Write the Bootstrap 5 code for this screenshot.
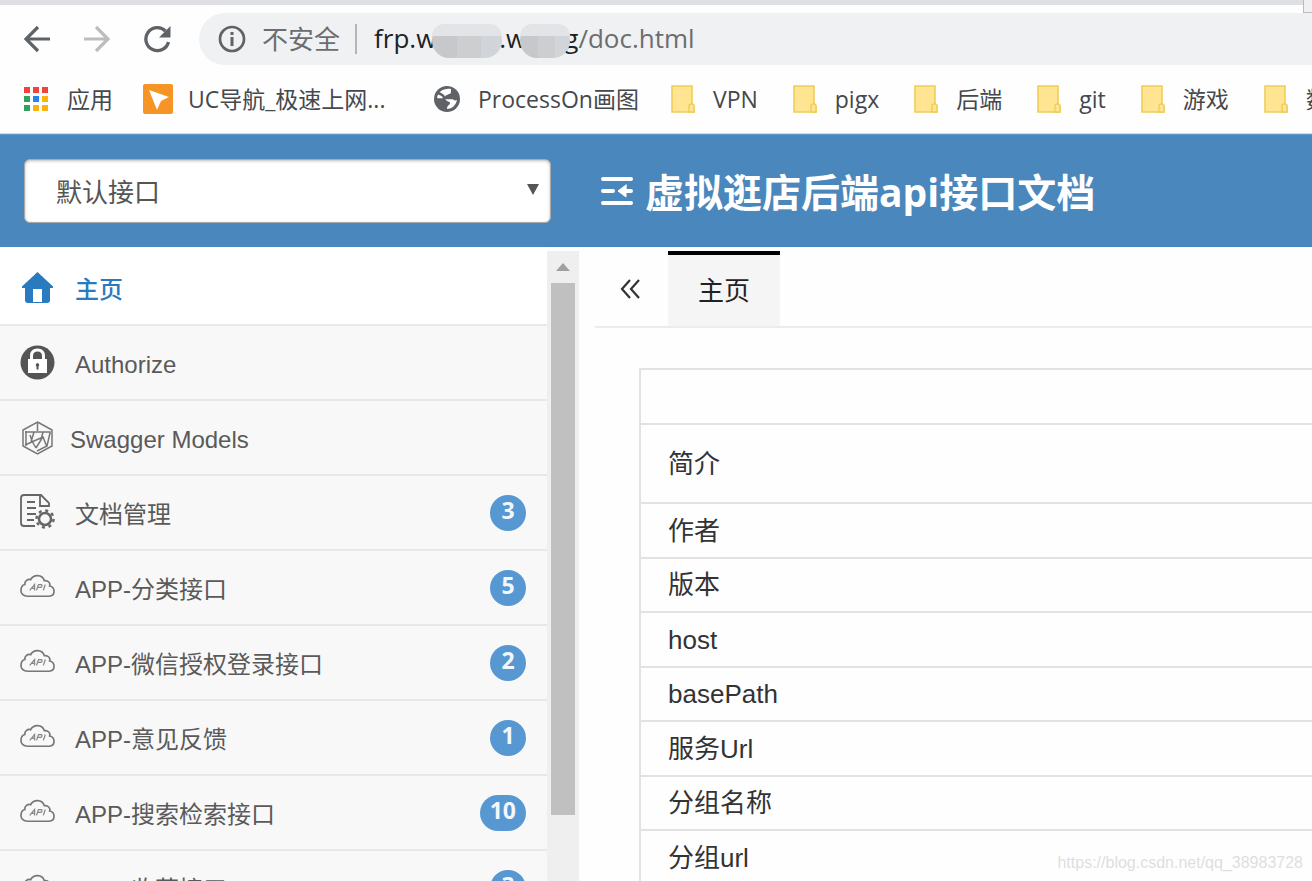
<!DOCTYPE html>
<html lang="zh-CN">
<head>
<meta charset="utf-8">
<meta name="viewport" content="width=device-width, initial-scale=1">
<title>虚拟逛店后端api接口文档</title>
<link href="https://cdn.jsdelivr.net/npm/bootstrap@5.3.0/dist/css/bootstrap.min.css" rel="stylesheet">
<style>
body{font-family:"Liberation Sans","Noto Sans CJK SC",sans-serif;font-size:24px;line-height:36px;color:#333;background:#fefefe}
svg{display:block;flex-shrink:0}
.ui-font{font-family:"Open Sans","Noto Sans CJK SC",sans-serif}
.tab-strip{height:5px;background:#dee0e5}
.corner{right:0;top:0;width:9px;height:13px;background:#f0f0f0;border-left:1px solid #bbb;border-bottom:1px solid #bbb}
.toolbar{padding:8px 0 0 23px}
.tool-btn{border:0;background:none;padding:0;width:28px;height:28px;margin-right:32px}
.tool-btn:last-of-type{margin-right:28px}
.omnibox{height:52px;background:#f0f1f3;border-radius:26px 0 0 26px;padding-left:19px;font-size:26px;color:#6b6d70}
.omnibox svg{margin-right:16px}
.split{width:2px;height:30px;background:#b4b5b8;margin:0 17px 0 15px}
.host{color:#202124}
.blob{display:inline-block;height:34px;border-radius:17px;vertical-align:middle;position:relative;background:linear-gradient(90deg,#c6c8cb 36%,#cdced0 36%,#cdced0 70%,#d1d4d8 70%)}
.blob::before{content:"";position:absolute;inset:0 0 auto;height:12px;border-radius:17px 17px 0 0;background:#e3e4e7}
.blob-a{width:70px;margin:0 -3px 0 -4px}
.blob-b{width:50px;margin:0 -6px 0 -6px}
.bookmarks{height:69px;padding-left:23px;border-bottom:1px solid #d5dbe0;font-size:23px;color:#45484c}
.bookmarks a{color:inherit;gap:18px;margin-right:35px}
.bookmarks a:first-child{margin-right:30px}
.bookmarks .uc{gap:15px;margin-right:29px}
.bookmarks .uc span{width:217px}
.bookmarks a:nth-child(3){margin-right:32px}
.top-head{height:113px;background:#4a87bc;border-top:1px solid #5f9acb;padding-left:24px}
.group-box{width:527px;margin-right:49px}
.group-box select{height:64px;border:1px solid #aaa;border-radius:6px;padding:4px 30px 0 31px;font-size:26px;color:#555;background:#fff;box-shadow:inset 0 1px 3px #bbb;appearance:none}
.group-box svg{right:12px;top:24px}
.page-title{font-size:39px;line-height:48px;font-weight:700;color:#fff;margin:0 0 0 11px;padding-top:2px}
.side-menu{width:547px}
.side-menu a{height:75px;padding:0 21px 0 20px;border-bottom:2px solid #e8e8e8;background:#f8f8f8;color:#5a5a5a}
.side-menu li:first-child a{height:79px;background:#fff;color:#2a7abf;font-weight:500;padding-top:4px}
.side-menu a svg{margin-right:20px;width:35px}
.side-menu li:nth-child(3) a svg{margin-right:15px}
.menu-text{padding-top:4px}
.count{min-width:36px;height:36px;border-radius:18px;background:#5798d2;color:#f2f7fc;padding:0 10px;line-height:31px;font-weight:700;font-size:23px;font-family:"Open Sans",sans-serif;text-align:center}
.scroll-rail{width:32px;margin-top:4px;background:#efefef}
.rail-btn{height:32px;border:0;padding:0;background:none}
.rail-thumb{width:24px;height:89%;background:#c0c0c0}
.tabs{height:81px;border-bottom:2px solid #ececec;padding-top:4px}
.tabs button{border:0;background:none;padding:0;color:#222}
.fold{width:73px}
.tabs .fold{padding-right:3px}
.tabs .tab-on{width:112px;background:#f5f5f5;border-top:4px solid #000;font-size:26px}
.doc-pane{margin-left:16px}
.doc-table{margin:40px 0 0 44px;border:2px solid #e2e2e2;border-right:0;font-size:26px;color:#333;border-collapse:collapse}
.doc-table th{height:54px;padding:0 27px;font-weight:400;border-bottom:2px solid #e2e2e2;line-height:36px}
.doc-table tr:nth-child(odd) th{height:55px}
.doc-table tr:nth-child(2) th{height:79px}
.watermark{right:9px;bottom:6px;font-size:16px;line-height:24px;color:#dedede}
</style>
</head>
<body class="vh-100 overflow-hidden d-flex flex-column position-relative">
<svg width="0" height="0" class="position-absolute" aria-hidden="true">
  <symbol id="folder" viewBox="0 0 24 28"><path d="M1 1h20v18q2 1 2 3v5H1z" fill="#ffe591" stroke="#f0cd58" stroke-width="1.6"/><path d="M18 27v-6q0-2 2.500-2t2.500 2v6z" fill="#ffe591" stroke="#f0cd58" stroke-width="1.4"/></symbol>
  <symbol id="cloud" viewBox="0 0 36 24"><path d="M8 22.500C3 22.500 1 19.500 1 16.500C1 13 3 11 5 10.500C4.500 7 8 4.500 11 5.500C13.500 0 23 -.5 25 6.500C29 6 31.500 9 30.500 12C33 12.500 35 14.500 35 17.500C35 20.500 33 22.500 30 22.500z" fill="none" stroke="#777" stroke-width="1.700"/><path d="M10 16.500l5-6v6m-3.500-2h3.500M17 16.500l2-6h3q1.500 1.500-.5 3h-3M24 16.500l2-6" fill="none" stroke="#888" stroke-width="1.300"/></symbol>
</svg>
<div class="tab-strip flex-shrink-0"></div>
<div class="corner position-absolute"></div>

<div class="toolbar d-flex align-items-center flex-shrink-0">
  <button class="tool-btn" aria-label="后退"><svg width="28" height="28" viewBox="0 0 28 28" fill="none" stroke="#5f6368" stroke-width="3.200"><path d="M27 14H3M15 2L3 14l12 12"/></svg></button>
  <button class="tool-btn" aria-label="前进"><svg width="28" height="28" viewBox="0 0 28 28" fill="none" stroke="#bbbdbf" stroke-width="3.200"><path d="M1 14h24M13 2l12 12-12 12"/></svg></button>
  <button class="tool-btn" aria-label="刷新"><svg width="28" height="28" viewBox="0 0 28 28"><path d="M22.500 6A11.500 11.500 0 1 0 25.500 17" fill="none" stroke="#5f6368" stroke-width="3.300"/><path d="M27.500 1v11.500H16z" fill="#5f6368"/></svg></button>
  <div class="omnibox ui-font d-flex align-items-center flex-grow-1 text-nowrap">
    <svg width="28" height="28" viewBox="0 0 28 28"><circle cx="14" cy="14" r="12" fill="none" stroke="#5f6368" stroke-width="2.700"/><path d="M12.500 7h3v3h-3zm0 5h3v9h-3z" fill="#5f6368"/></svg>
    <span>不安全</span><span class="split"></span>
    <span><span class="host">frp.w<span class="blob blob-a"></span>.w<span class="blob blob-b"></span>g</span>/doc.html</span>
  </div>
</div>

<nav class="bookmarks ui-font d-flex align-items-center flex-shrink-0 text-nowrap overflow-hidden" aria-label="书签">
  <a href="#" class="d-flex align-items-center text-decoration-none flex-shrink-0"><svg width="26" height="26" viewBox="0 0 26 26"><path d="M1 1h6v6H1zM10 1h6v6h-6zM19 1h6v6h-6z" fill="#f1423c"/><path d="M1 10h6v6H1zM1 19h6v6H1z" fill="#34a05a"/><path d="M10 10h6v6h-6z" fill="#2186f3"/><path d="M19 10h6v6h-6zM10 19h6v6h-6zM19 19h6v6h-6z" fill="#fbb20c"/></svg><span>应用</span></a>
  <a href="#" class="uc d-flex align-items-center text-decoration-none flex-shrink-0"><svg width="30" height="30" viewBox="0 0 30 30"><rect width="30" height="30" rx="2" fill="#f69426"/><path d="M6 6l20 7-8 4-4 9z" fill="#fff"/></svg><span>UC导航_极速上网...</span></a>
  <a href="#" class="d-flex align-items-center text-decoration-none flex-shrink-0"><svg width="26" height="26" viewBox="0 0 26 26"><circle cx="13" cy="13" r="13" fill="#5f6368"/><path d="M3 12c3 1 7-1 9 2c1 2 4 1 4 3c0 2-3 2-3 6c5 0 9-4 10-9c-2 1-4 0-5-2c-3 0-7 1-7-1c0-3 6-2 6-5V3C9 2 4 6 3 12z" fill="#fff"/><path d="M4 7c3 1 6 3 6 5h8l1-4" fill="none" stroke="#5f6368" stroke-width="2.500"/></svg><span>ProcessOn画图</span></a>
  <a href="#" class="d-flex align-items-center text-decoration-none flex-shrink-0"><svg width="24" height="28"><use href="#folder"/></svg><span>VPN</span></a>
  <a href="#" class="d-flex align-items-center text-decoration-none flex-shrink-0"><svg width="24" height="28"><use href="#folder"/></svg><span>pigx</span></a>
  <a href="#" class="d-flex align-items-center text-decoration-none flex-shrink-0"><svg width="24" height="28"><use href="#folder"/></svg><span>后端</span></a>
  <a href="#" class="d-flex align-items-center text-decoration-none flex-shrink-0"><svg width="24" height="28"><use href="#folder"/></svg><span>git</span></a>
  <a href="#" class="d-flex align-items-center text-decoration-none flex-shrink-0"><svg width="24" height="28"><use href="#folder"/></svg><span>游戏</span></a>
  <a href="#" class="d-flex align-items-center text-decoration-none flex-shrink-0"><svg width="24" height="28"><use href="#folder"/></svg><span>数</span></a>
</nav>

<header class="top-head d-flex align-items-center flex-shrink-0 text-nowrap">
  <div class="group-box position-relative flex-shrink-0">
    <select class="w-100 d-block" aria-label="接口分组"><option>默认接口</option></select>
    <svg class="position-absolute" width="12" height="13" viewBox="0 0 12 13"><path d="M0 1h12L6 12z" fill="#555"/></svg>
  </div>
  <svg width="34" height="30" viewBox="0 0 34 30" fill="none" stroke="#fff" stroke-width="4" stroke-linecap="round"><path d="M3 3h28M3 15h10M3 27h28M22 15h9"/><path d="M26 9l-8 6 8 6v-6z" fill="#fff" stroke-width="1"/></svg>
  <h1 class="page-title ui-font">虚拟逛店后端api接口文档</h1>
</header>

<div class="d-flex flex-grow-1 overflow-hidden">
  <ul class="side-menu list-unstyled m-0 flex-shrink-0 text-nowrap">
    <li><a href="#" class="d-flex align-items-center text-decoration-none"><svg height="34" viewBox="0 0 35 34"><path d="M17.500 1L33 15.500V17h-3v12q0 3-3 3H8q-3 0-3-3V17H2v-1.500z" fill="#2a7abf"/><path d="M13 18h9v13h-9z" fill="#fff"/></svg><span class="menu-text">主页</span></a></li>
    <li><a href="#" class="d-flex align-items-center text-decoration-none"><svg height="36" viewBox="0 0 35 36"><circle cx="17.500" cy="17.500" r="17" fill="#555"/><path d="M11.500 15V11q0-6 6-6t6 6v4" fill="none" stroke="#fff" stroke-width="3"/><path d="M8 14h19v14H8z" fill="#fff"/><path d="M17.500 18a2 2 0 0 1 1 3.500v3h-2v-3a2 2 0 0 1 1-3.500" fill="#555"/></svg><span class="menu-text">Authorize</span></a></li>
    <li><a href="#" class="d-flex align-items-center text-decoration-none"><svg height="34" viewBox="0 0 35 34" fill="none" stroke="#777" stroke-width="1.500"><path d="M17.500 1L32 9v16l-14.500 8L3 25V9z"/><path d="M5 11h25v2M6 10v15M30 12l-3 13-10 5M17.500 2v8M5 24l18-8 4 10M10 14l2 6 4 7M14 11l-3 10M23 11l-2 8-5 8"/></svg><span class="menu-text">Swagger Models</span></a></li>
    <li><a href="#" class="d-flex align-items-center text-decoration-none"><svg height="40" viewBox="0 0 35 40" fill="none" stroke="#666" stroke-width="1.800"><path d="M15 33H4q-3 0-3-3V5q0-3 3-3h17l8 8v4M20 2v11h9M7 9h8M7 15h9M7 21h9M7 27h7"/><circle cx="25" cy="26" r="6" stroke-width="2.500"/><circle cx="25" cy="26" r="8.500" stroke-width="2.500" stroke-dasharray="3 3.670"/></svg><span class="menu-text">文档管理</span><span class="count ms-auto">3</span></a></li>
    <li><a href="#" class="d-flex align-items-center text-decoration-none"><svg height="28"><use href="#cloud" height="24"/></svg><span class="menu-text">APP-分类接口</span><span class="count ms-auto">5</span></a></li>
    <li><a href="#" class="d-flex align-items-center text-decoration-none"><svg height="28"><use href="#cloud" height="24"/></svg><span class="menu-text">APP-微信授权登录接口</span><span class="count ms-auto">2</span></a></li>
    <li><a href="#" class="d-flex align-items-center text-decoration-none"><svg height="28"><use href="#cloud" height="24"/></svg><span class="menu-text">APP-意见反馈</span><span class="count ms-auto">1</span></a></li>
    <li><a href="#" class="d-flex align-items-center text-decoration-none"><svg height="28"><use href="#cloud" height="24"/></svg><span class="menu-text">APP-搜索检索接口</span><span class="count ms-auto">10</span></a></li>
    <li><a href="#" class="d-flex align-items-center text-decoration-none"><svg height="28"><use href="#cloud" height="24"/></svg><span class="menu-text">APP-收藏接口</span><span class="count ms-auto">3</span></a></li>
  </ul>
  <div class="scroll-rail d-flex flex-column align-items-center flex-shrink-0">
    <button class="rail-btn flex-shrink-0" aria-label="向上滚动"><svg width="14" height="8" viewBox="0 0 14 8"><path d="M0 8l7-8 7 8z" fill="#a0a0a0"/></svg></button>
    <div class="w-100 flex-grow-1 d-flex justify-content-center"><div class="rail-thumb"></div></div>
  </div>
  <main class="doc-pane flex-grow-1">
    <div class="tabs d-flex">
      <button class="fold d-flex align-items-center justify-content-center" aria-label="收起标签"><svg width="20" height="20" viewBox="0 0 20 20" fill="none" stroke="#333" stroke-width="2.200"><path d="M10 1L2 10l8 9M19 1l-8 9 8 9"/></svg></button>
      <button class="tab-on">主页</button>
    </div>
    <div class="d-flex">
      <table class="doc-table flex-grow-1">
        <tbody>
          <tr><th></th></tr>
          <tr><th scope="row">简介</th></tr>
          <tr><th scope="row">作者</th></tr>
          <tr><th scope="row">版本</th></tr>
          <tr><th scope="row">host</th></tr>
          <tr><th scope="row">basePath</th></tr>
          <tr><th scope="row">服务Url</th></tr>
          <tr><th scope="row">分组名称</th></tr>
          <tr><th scope="row">分组url</th></tr>
        </tbody>
      </table>
    </div>
  </main>
</div>
<div class="watermark position-absolute">https://blog.csdn.net/qq_38983728</div>
<script src="https://cdn.jsdelivr.net/npm/bootstrap@5.3.0/dist/js/bootstrap.bundle.min.js"></script>
</body>
</html>
